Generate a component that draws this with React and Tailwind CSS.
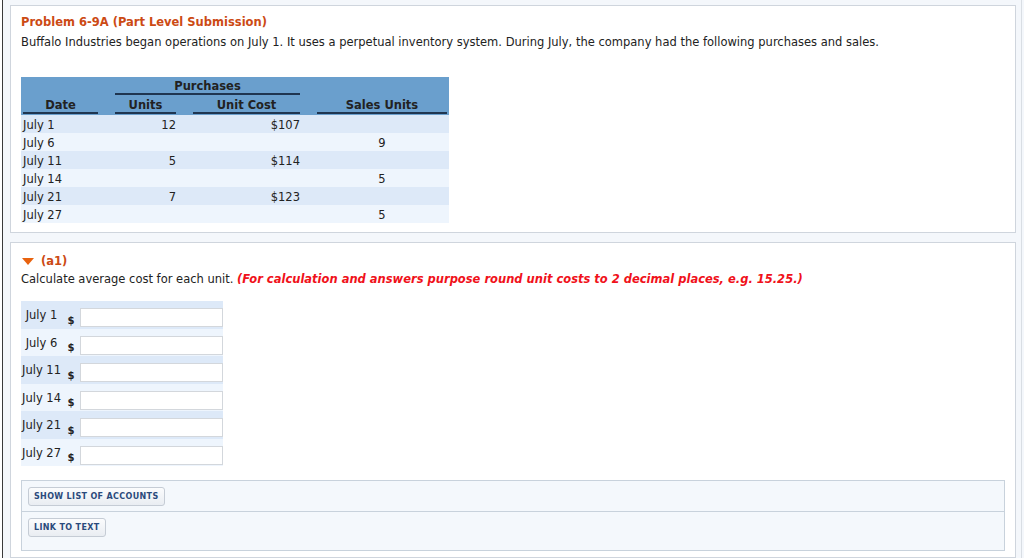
import React from "react";

const purchases = [
  { date: "July 1", units: "12", cost: "$107", sales: "" },
  { date: "July 6", units: "", cost: "", sales: "9" },
  { date: "July 11", units: "5", cost: "$114", sales: "" },
  { date: "July 14", units: "", cost: "", sales: "5" },
  { date: "July 21", units: "7", cost: "$123", sales: "" },
  { date: "July 27", units: "", cost: "", sales: "5" },
];

const answerDates = ["July 1", "July 6", "July 11", "July 14", "July 21", "July 27"];

const PurchasesTable = () => (
  <div className="w-[428px] text-[11.5px] text-[#222]">
    {/* header */}
    <div className="bg-[#6a9fcd] px-[2px] font-bold">
      <div className="flex h-[18px] gap-[17px]">
        <div className="w-[75px]" />
        <div className="flex w-[185px] flex-col items-center">
          <div className="h-[16px] pt-[2px] leading-[14px]">Purchases</div>
          <div className="h-[2px] w-full bg-[#1f3550]" />
        </div>
      </div>
      <div className="flex h-[20px] gap-[17px]">
        {[
          ["Date", "w-[75px]"],
          ["Units", "w-[61px]"],
          ["Unit Cost", "w-[107px]"],
          ["Sales Units", "w-[130px]"],
        ].map(([label, w]) => (
          <div key={label} className={`${w} flex flex-col`}>
            <div className="h-[17px] pt-[3px] text-center leading-[14px]">{label}</div>
            <div className="h-[2px] w-full bg-[#1f3550]" />
          </div>
        ))}
      </div>
    </div>
    {/* rows */}
    {purchases.map((row, i) => (
      <div
        key={row.date}
        className={`flex h-[18px] gap-[17px] px-[2px] pt-[3px] leading-[14px] ${
          i % 2 === 0 ? "bg-[#dde9f8]" : "bg-[#eef5fd]"
        }`}
      >
        <div className="w-[75px]">{row.date}</div>
        <div className="w-[61px] text-right">{row.units}</div>
        <div className="w-[107px] text-right">{row.cost}</div>
        <div className="w-[130px] text-center">{row.sales}</div>
      </div>
    ))}
  </div>
);

const AnswerRows = () => (
  <div className="w-[202px] text-[11.5px] text-[#222]">
    {answerDates.map((d, i) => (
      <div
        key={d}
        className={`flex h-[27.5px] ${i % 2 === 0 ? "bg-[#dde9f8]" : "bg-[#eef5fd]"}`}
      >
        <div className="flex w-[41px] justify-center overflow-hidden whitespace-nowrap pt-[7px] leading-[14px]">
          {d}
        </div>
        <div className="flex w-[18px] items-end justify-center pb-[1px] text-[10px] font-bold leading-[14px]">
          $
        </div>
        <div className="pt-[7px]">
          <input
            type="text"
            className="block h-[19px] w-[143px] border border-[#d3d7dc] bg-white outline-none"
          />
        </div>
      </div>
    ))}
  </div>
);

const SmallButton = ({ children }) => (
  <button className="block h-[19px] rounded-[3px] border border-[#c5ccd5] bg-gradient-to-b from-[#fbfcfd] to-[#e9edf2] px-[5px] text-[8px] font-bold uppercase leading-[17px] tracking-[0.35px] text-[#2a4a7c]">
    {children}
  </button>
);

export default function App() {
  return (
    <div className="flex h-[558px] w-[1024px] overflow-hidden bg-white font-['DejaVu_Sans',Verdana,sans-serif]">
      <div className="w-[2px]" />
      <div className="w-[1px] bg-[#3a3a3a]" />
      <div className="flex min-w-0 flex-1 flex-col gap-[9px] bg-[#f4f7fb] pl-[7px] pr-[5px] pt-[5px]">
        {/* problem panel */}
        <div className="border border-[#cfd5dd] bg-white pb-[9px] pl-[10px] pt-[9px]">
          <div className="text-[11.5px] font-bold leading-[14px] text-[#cc4a14]">
            Problem 6-9A (Part Level Submission)
          </div>
          <div className="mt-[6px] text-[11.5px] leading-[14px] text-[#222]">
            Buffalo Industries began operations on July 1. It uses a perpetual inventory system.
            During July, the company had the following purchases and sales.
          </div>
          <div className="mt-[28px]">
            <PurchasesTable />
          </div>
        </div>

        {/* part a1 panel */}
        <div className="flex-1 border border-[#cfd5dd] bg-white pl-[10px] pr-[10px] pt-[11px]">
          <div className="flex items-center gap-[7px] text-[11.5px] font-bold leading-[14px] text-[#cc4a14]">
            <svg width="12" height="7" viewBox="0 0 12 7" className="ml-[1px]">
              <polygon points="0,0 12,0 6,7" fill="#e8620f" />
            </svg>
            <span>(a1)</span>
          </div>
          <div className="mt-[4px] text-[11.5px] leading-[14px] text-[#222]">
            Calculate average cost for each unit.{" "}
            <span className="font-bold italic text-[#f0111a]">
              (For calculation and answers purpose round unit costs to 2 decimal places, e.g.
              15.25.)
            </span>
          </div>
          <div className="mt-[15px]">
            <AnswerRows />
          </div>
          <div className="mt-[14px] border border-[#c8d2dc] bg-[#f4f8fc]">
            <div className="flex border-b border-[#c8d2dc] pb-[5px] pl-[6px] pt-[6px]">
              <SmallButton>Show List of Accounts</SmallButton>
            </div>
            <div className="flex pb-[13px] pl-[6px] pt-[6px]">
              <SmallButton>Link to Text</SmallButton>
            </div>
          </div>
        </div>
      </div>
      <div className="w-[1px] bg-[#d9dee4]" />
      <div className="w-[2px] bg-[#f4f7fb]" />
    </div>
  );
}
